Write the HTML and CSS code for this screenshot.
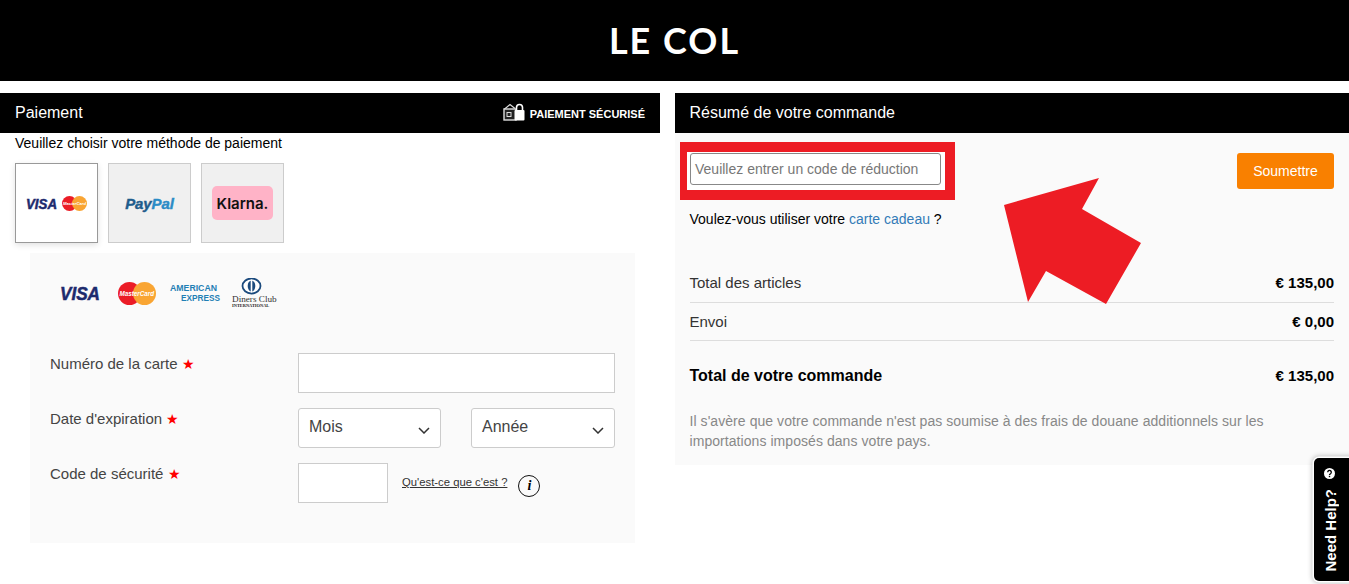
FILE: index.html
```html
<!DOCTYPE html>
<html lang="fr">
<head>
<meta charset="utf-8">
<title>Le Col - Paiement</title>
<link rel="stylesheet" href="styles.css">
</head>
<body>
<header class="site-header"><span class="logo">LE COL</span></header>
<main class="checkout">
  <section class="pay">
    <div class="bar">
      <h2 class="bar-title">Paiement</h2>
      <div class="secure">
        <svg class="secure-icon" width="22" height="18" viewBox="0 0 22 18"><path d="M1 6.500 7 1.500l5 4" fill="none" stroke="#ddd" stroke-width="1.200"/><rect x="1" y="6" width="12" height="11" fill="#222" stroke="#ddd" stroke-width="1.400"/><rect x="4" y="9.500" width="4" height="4" fill="none" stroke="#ddd"/><path d="M13.500 7V4.500a3 3 0 0 1 6 0V7" fill="none" stroke="#fff" stroke-width="1.600"/><rect x="11.500" y="7" width="10" height="10.500" rx="1" fill="#fff"/></svg>
        <span class="secure-text">PAIEMENT SÉCURISÉ</span>
      </div>
    </div>
    <p class="choose">Veuillez choisir votre méthode de paiement</p>
    <div class="methods">
      <div class="method method-active">
        <svg width="61" height="15" viewBox="0 0 61 15"><text class="visa-text" x="0" y="12.500" font-size="14" textLength="31" lengthAdjust="spacingAndGlyphs">VISA</text><circle cx="43.500" cy="7.500" r="7.500" fill="#eb1c26"/><circle cx="53.500" cy="7.500" r="7.500" fill="#f9a533"/><text class="mc-text" x="37" y="9" font-size="4.200">MasterCard</text></svg>
      </div>
      <div class="method">
        <span class="paypal"><span class="pay-a">Pay</span><span class="pay-b">Pal</span></span>
      </div>
      <div class="method">
        <span class="klarna">Klarna.</span>
      </div>
    </div>
    <form class="card-box">
      <div class="brands">
        <svg width="222" height="32" viewBox="0 0 222 32">
          <text class="visa-text" x="0" y="21.500" font-size="18" textLength="40" lengthAdjust="spacingAndGlyphs">VISA</text>
          <circle cx="69.500" cy="15.500" r="11.500" fill="#eb1c26"/><circle cx="84.500" cy="15.500" r="11.500" fill="#f9a533"/>
          <text class="mc-text" x="59.500" y="18" font-size="6.300">MasterCard</text>
          <text class="amex-text" x="110" y="13" font-size="9" textLength="47" lengthAdjust="spacingAndGlyphs">AMERICAN</text>
          <text class="amex-text" x="121" y="23" font-size="9" textLength="39" lengthAdjust="spacingAndGlyphs">EXPRESS</text>
          <ellipse cx="191.500" cy="8" rx="9" ry="7.500" fill="#fff" stroke="#1b4a7d" stroke-width="1.800"/><ellipse cx="191.500" cy="8" rx="3.800" ry="5.500" fill="#1b4a7d"/><rect x="190.700" y="1.500" width="1.600" height="13" fill="#fff"/>
          <text class="diners-text" x="172" y="24" font-size="9.200">Diners Club</text>
          <text class="diners-small" x="172" y="29" font-size="4.400">INTERNATIONAL</text>
        </svg>
      </div>
      <div class="row">
        <label class="lbl">Numéro de la carte <span class="star">★</span></label>
        <div class="field field-full"></div>
      </div>
      <div class="row">
        <label class="lbl">Date d'expiration <span class="star">★</span></label>
        <div class="selects">
          <div class="sel"><span>Mois</span><svg class="chev" width="12" height="7" viewBox="0 0 12 7"><path d="M1 1l5 5 5-5" fill="none" stroke="#333" stroke-width="1.500"/></svg></div>
          <div class="sel"><span>Année</span><svg class="chev" width="12" height="7" viewBox="0 0 12 7"><path d="M1 1l5 5 5-5" fill="none" stroke="#333" stroke-width="1.500"/></svg></div>
        </div>
      </div>
      <div class="row row-last">
        <label class="lbl">Code de sécurité <span class="star">★</span></label>
        <div class="field field-cvv"></div>
        <a class="what" href="#">Qu'est-ce que c'est ?</a>
        <span class="info">i</span>
      </div>
    </form>
  </section>

  <section class="summary">
    <div class="bar"><h2 class="bar-title">Résumé de votre commande</h2></div>
    <div class="summary-body">
      <div class="promo">
        <div class="promo-input">Veuillez entrer un code de réduction</div>
        <button class="submit" type="button">Soumettre</button>
      </div>
      <p class="gift">Voulez-vous utiliser votre <a class="gift-link" href="#">carte cadeau</a> ?</p>
      <div class="line line-first"><span>Total des articles</span><b>€ 135,00</b></div>
      <div class="line"><span>Envoi</span><b>€ 0,00</b></div>
      <div class="line-total"><span class="total-label">Total de votre commande</span><b>€ 135,00</b></div>
      <p class="note">Il s'avère que votre commande n'est pas soumise à des frais de douane additionnels sur les importations imposés dans votre pays.</p>
    </div>
  </section>
</main>

<div class="highlight"></div>
<svg class="arrow" width="1349" height="584" viewBox="0 0 1349 584"><polygon points="1099,178 1004,205 1028,302 1046,271 1106,304 1141,243 1082,209" fill="#ed1c24"/></svg>

<div class="help">
  <span class="help-text">Need Help?</span>
  <svg class="help-icon" width="13" height="13" viewBox="0 0 13 13"><circle cx="6.500" cy="6.500" r="5.500" fill="#fff"/><path d="M4.700 5.200a1.800 1.800 0 1 1 2.800 1.500c-.7.400-1 .8-1 1.300" fill="none" stroke="#000" stroke-width="1.300"/><rect x="5.800" y="8.800" width="1.400" height="1.400" fill="#000"/></svg>
</div>
</body>
</html>
```
FILE: styles.css
```css
* { box-sizing: border-box; }
html, body { margin: 0; padding: 0; }
body {
  font-family: "Liberation Sans", Arial, sans-serif;
  font-size: 14px;
  color: #000;
  background: #fff;
  height: 584px;
  overflow: hidden;
}
.site-header {
  height: 81px;
  background: #000;
  display: flex;
  align-items: center;
  justify-content: center;
}
.logo {
  font-family: Lato, sans-serif;
  font-weight: 700;
  font-size: 36px;
  line-height: 1;
  letter-spacing: 2px;
  color: #fff;
  margin-top: -2px;
}
.checkout {
  display: grid;
  grid-template-columns: 660px 674px;
  column-gap: 15px;
  margin-top: 12px;
  align-items: start;
}
.bar {
  height: 40px;
  background: #000;
  color: #fff;
  display: flex;
  align-items: center;
  justify-content: space-between;
  padding: 0 15px;
}
.summary .bar { padding-left: 14.500px; }
.bar-title { margin: 0; font-size: 16px; font-weight: 400; }
.secure { display: flex; align-items: center; gap: 5px; }
.secure-icon { display: block; margin-top: -3px; }
.secure-text { font-size: 11px; font-weight: 700; margin-top: 2px; }
.choose { margin: 2px 0 0 15px; line-height: 16px; }
.methods { display: flex; gap: 10px; margin: 12px 0 10px 15px; }
.method {
  width: 83px;
  height: 80px;
  border: 1px solid #ccc;
  background: #f0f0f0;
  display: flex;
  align-items: center;
  justify-content: center;
}
.method-active {
  border-color: #999;
  background: #fff;
  box-shadow: 0 2px 6px rgba(0, 0, 0, .12);
}
.visa-text {
  font-family: "Liberation Sans", sans-serif;
  font-weight: 700;
  font-style: italic;
  fill: #1d2a6d;
  stroke: #1d2a6d;
  stroke-width: .5px;
}
.mc-text { font-family: "Liberation Sans", sans-serif; font-weight: 700; font-style: italic; fill: #fff; }
.amex-text { font-family: "Liberation Sans", sans-serif; font-weight: 700; fill: #1f7fb5; }
.diners-text { font-family: "Liberation Serif", serif; fill: #333; }
.diners-small { font-family: "Liberation Serif", serif; font-weight: 700; fill: #222; }
.paypal {
  font-size: 15px;
  font-weight: 700;
  font-style: italic;
  letter-spacing: -.1px;
  -webkit-text-stroke: .4px currentColor;
}
.pay-a { color: #1f5c8c; }
.pay-b { color: #2a8cc6; }
.klarna {
  width: 61px;
  height: 34px;
  background: #ffb3c7;
  border-radius: 5px;
  display: flex;
  align-items: center;
  justify-content: center;
  font-family: Inter, sans-serif;
  font-weight: 600;
  font-size: 15px;
  color: #111;
}
.card-box {
  width: 605px;
  height: 290px;
  margin-left: 30px;
  background: #fafafa;
  padding: 25px 20px 0;
}
.brands { height: 75px; padding-left: 10px; }
.brands svg { display: block; }
.row { display: flex; align-items: flex-start; height: 55px; }
.lbl { width: 248px; color: #444; font-size: 15px; line-height: 22px; flex: none; }
.star { color: #f00; font-size: 14px; }
.field { background: #fff; border: 1px solid #ccc; height: 40px; }
.field-full { width: 317px; }
.field-cvv { width: 90px; flex: none; }
.selects { display: grid; grid-template-columns: 143px 144px; column-gap: 30px; }
.sel {
  height: 40px;
  background: #fff;
  border: 1px solid #ccc;
  border-radius: 3px;
  padding: 8px 10px;
  font-size: 16px;
  line-height: 20px;
  color: #444;
  position: relative;
}
.chev { position: absolute; right: 10px; top: 18px; }
.what { margin: 12px 0 0 14px; font-size: 11.300px; line-height: 14px; color: #333; }
.info {
  width: 22px;
  height: 22px;
  margin: 12px 0 0 11px;
  border: 1.500px solid #111;
  border-radius: 50%;
  display: flex;
  align-items: center;
  justify-content: center;
  font-family: "Liberation Serif", serif;
  font-style: italic;
  font-weight: 700;
  font-size: 14px;
}
.summary-body { background: #fafafa; height: 332px; padding: 20px 15px 0 14.500px; }
.promo { display: flex; justify-content: space-between; align-items: flex-start; }
.promo-input {
  width: 251px;
  height: 32px;
  background: #fff;
  border: 1px solid #888;
  border-radius: 3px;
  padding: 0 5px 0 4.500px;
  line-height: 30px;
  color: #777;
  position: relative;
  z-index: 2;
}
.submit {
  width: 97px;
  height: 36px;
  border: 0;
  border-radius: 3px;
  background: #f98000;
  color: #fff;
  font: 14px "Liberation Sans", Arial, sans-serif;
}
.gift { margin: 21px 0 0; line-height: 18px; }
.gift-link { color: #337ab7; text-decoration: none; }
.line {
  display: flex;
  justify-content: space-between;
  align-items: center;
  height: 38.500px;
  border-bottom: 1px solid #ddd;
  color: #333;
  font-size: 15px;
}
.line b { color: #000; }
.line-first { margin-top: 36px; }
.line-total {
  display: flex;
  justify-content: space-between;
  align-items: center;
  margin-top: 26px;
  line-height: 18px;
  font-size: 15px;
}
.total-label { font-weight: 700; font-size: 16px; }
.note { margin: 26px 0 0; color: #888; line-height: 20px; font-size: 14px; letter-spacing: .06px; }
.highlight {
  position: absolute;
  left: 680px;
  top: 142px;
  width: 275px;
  height: 58px;
  border: solid #ed1c24;
  border-width: 10px 10px 10px 7px;
  background: #fff;
}
.arrow { position: absolute; left: 0; top: 0; pointer-events: none; }
.help {
  position: absolute;
  left: 1314px;
  top: 458px;
  width: 40px;
  height: 123px;
  background: #000;
  border-radius: 5px 0 0 5px;
  box-shadow: 0 0 0 1.500px #fff, 0 0 5px 2px rgba(0, 0, 0, .25);
  color: #fff;
  display: flex;
  flex-direction: column-reverse;
  align-items: flex-start;
  padding: 9px 0 9px 9px;
  justify-content: space-between;
}
.help-text {
  writing-mode: vertical-rl;
  transform: rotate(180deg);
  font-weight: 700;
  font-size: 15px;
  line-height: 15px;
}
.help-icon { display: block; }
```
